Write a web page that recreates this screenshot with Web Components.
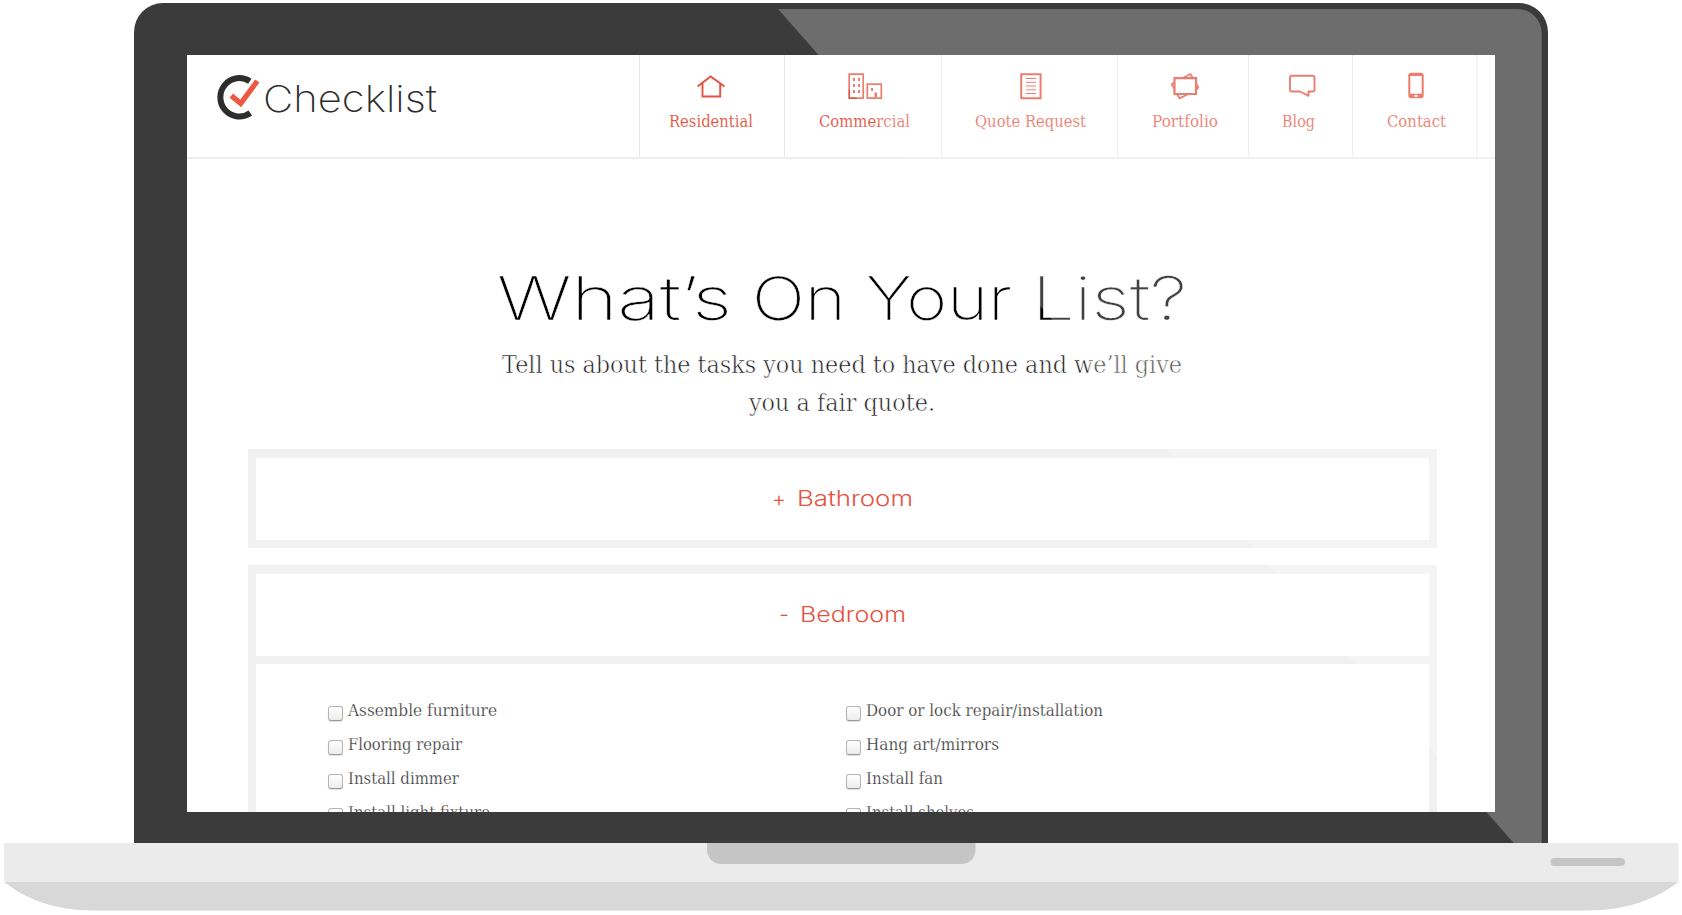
<!DOCTYPE html>
<html lang="en">
<head>
<meta charset="utf-8">
<title>Checklist</title>
<style>
html,body{margin:0;background:#fff}
body{width:1682px;height:915px;overflow:hidden;font-family:"DejaVu Serif",serif}
</style>
</head>
<body>
<laptop-frame>
  <site-header>
    <nav-item label="Residential" icon="house" cell="145.5" text="84" shift="-1"></nav-item>
    <nav-item label="Commercial" icon="buildings" cell="157" text="91" shift="3"></nav-item>
    <nav-item label="Quote Request" icon="sheet" cell="175.5" text="111" shift="3"></nav-item>
    <nav-item label="Portfolio" icon="frames" cell="131" text="66" shift="4"></nav-item>
    <nav-item label="Blog" icon="bubble" cell="104" text="33" shift="-4"></nav-item>
    <nav-item label="Contact" icon="phone" cell="124.5" text="59" shift="4"></nav-item>
  </site-header>
  <hero-title></hero-title>
  <accordion-panel sign="+" name="Bathroom" text="116" gap="11" signwidth="14"></accordion-panel>
  <accordion-panel sign="-" name="Bedroom" text="106" gap="11" signwidth="10" open>
    <check-item label="Assemble furniture" text="149"></check-item>
    <check-item label="Door or lock repair/installation" text="237"></check-item>
    <check-item label="Flooring repair" text="114"></check-item>
    <check-item label="Hang art/mirrors" text="133"></check-item>
    <check-item label="Install dimmer" text="111"></check-item>
    <check-item label="Install fan" text="77"></check-item>
    <check-item label="Install light fixture" text="142"></check-item>
    <check-item label="Install shelves" text="108"></check-item>
  </accordion-panel>
</laptop-frame>
<script>
const root = (el, html) => { const r = el.attachShadow({mode:'open'}); r.innerHTML = html; return r; };

/* Stretches one line of text to the width asked for */
customElements.define('fit-text', class extends HTMLElement {
  connectedCallback(){
    const w = +this.getAttribute('width');
    const r = root(this, `<style>:host{display:block;flex:none;width:${w}px;white-space:nowrap}
      span{display:inline-block;transform-origin:0 50%}</style><span><slot></slot></span>`);
    const s = r.querySelector('span');
    s.style.transform = `scaleX(${w / s.getBoundingClientRect().width})`;
  }
});

customElements.define('laptop-frame', class extends HTMLElement {
  connectedCallback(){
    root(this, `<style>
      :host{display:block;position:relative;width:1682px;height:912px;padding-top:3px}
      .lid{box-sizing:border-box;width:1414px;height:840px;margin-left:134px;padding:52px 53px 31px 53px;background:#3b3b3b;border-radius:29px 29px 0 0}
      .screen{height:757px;overflow:hidden;background:#fff}
      .glare{position:absolute;left:0;top:0;pointer-events:none}
      .base{display:block}
    </style>
    <div class="lid"><div class="screen"><slot></slot></div></div>
    <svg class="base" width="1682" height="69" viewBox="0 843 1682 69">
      <path fill="#ebebeb" d="M4 843H1678.500V882H4Z"/>
      <path fill="#d8d8d8" d="M4 882H1678.500C1656 899 1626 910.500 1588 910.500H93C55 910.500 26 899 4 882Z"/>
      <path fill="#c5c5c5" d="M707 843H975.500V850A14 14 0 0 1 961.500 864H721A14 14 0 0 1 707 850Z"/>
      <rect x="1550.500" y="858" width="74.500" height="8" rx="4" fill="#c5c5c5"/>
    </svg>
    <svg class="glare" width="1682" height="843" viewBox="0 0 1682 843"><path fill="#fff" fill-opacity=".255" d="M778 9H1518A24 24 0 0 1 1541.700 33V843H1513.700Z"/></svg>`);
  }
});

customElements.define('brand-logo', class extends HTMLElement {
  connectedCallback(){
    root(this, `<style>:host{display:flex;color:#2d2d2d;font:200 37px/40px Inter,sans-serif}
      svg{display:block;margin-top:20px}fit-text{margin:24px 0 0 1px}</style>
      <svg width="46" height="46" viewBox="217 75 46 46" fill="none">
      <path stroke="#2d2d2d" stroke-width="6" d="M250.800 81.300A19 19.200 0 1 0 251.300 113"/>
      <path stroke="#ee5843" stroke-width="5.300" d="M232.300 95.600L241.700 103.500L258.300 81"/></svg>
      <fit-text width="174">Checklist</fit-text>`);
  }
});

customElements.define('site-header', class extends HTMLElement {
  connectedCallback(){
    root(this, `<style>:host{display:flex;box-sizing:border-box;height:104px;border-bottom:2px solid #eee}
      brand-logo{box-sizing:border-box;width:451.500px;padding-left:28.500px}
      nav{display:flex;border-right:2px solid #f2f2f2}</style>
      <brand-logo></brand-logo><nav><slot></slot></nav>`);
  }
});

const ICONS = {
  house:`<svg width="30" height="28" viewBox="697 72 30 28"><path stroke-width="1.900" d="M698.500 86.500L711.700 76.500L725.500 86.500M703.500 83V96.500H721.200V83"/></svg>`,
  buildings:`<svg width="36" height="28" viewBox="847 72 36 28"><path stroke-width="1.700" d="M849.200 74.200H863.200V98.200H849.200ZM867.300 84.200H881.300V98.200H867.300Z"/><path fill="currentColor" stroke="none" d="M853 78h2v3h-2zm5 0h2v3h-2zm-5 6h2v3h-2zm5 0h2v3h-2zm-5 6h2v3h-2zm5 0h2v3h-2zM871 88h2v3h-2zM874.500 92.500h2.500V97.500h-2.500z"/></svg>`,
  sheet:`<svg width="24" height="28" viewBox="1019 72 24 28"><path stroke-width="2" d="M1021.200 74.300H1040.600V98.200H1021.200Z"/><path stroke-width="1" d="M1026 78.500H1036M1026 82.300H1036M1026 86H1036M1026 89.800H1036M1026 93.500H1036"/></svg>`,
  frames:`<svg width="32" height="28" viewBox="1169 72 32 28"><path stroke-width="2.200" d="M1174.500 78.200H1196V94H1174.500Z"/><path stroke-width="1.700" d="M1182.500 78L1190.500 74L1193 78M1177 94L1179.500 98.300L1188 94.300M1174 82.500L1171.800 84.500L1174.500 89M1196.500 83.500L1198.300 87.500L1196.500 89.500"/></svg>`,
  bubble:`<svg width="28" height="28" viewBox="1288 72 28 28" style="margin-left:7px"><path stroke-width="1.900" stroke-linejoin="round" d="M1292 75.700H1312.500Q1314.500 75.700 1314.500 77.700V89.500Q1314.500 91.500 1312.500 91.500H1308.500V95.800L1300 91.500H1292Q1290 91.500 1290 89.500V77.700Q1290 75.700 1292 75.700Z"/></svg>`,
  phone:`<svg width="18" height="28" viewBox="1408 72 18 28"><path fill="currentColor" stroke="none" fill-rule="evenodd" d="M1412 72.700H1422Q1424.700 72.700 1424.700 75.400V95.500Q1424.700 98.200 1422 98.200H1412Q1409.300 98.200 1409.300 95.500V75.400Q1409.300 72.700 1412 72.700ZM1411.300 76V93.800H1422.700V76ZM1415.500 95H1418.500V97H1415.500Z"/></svg>`
};
customElements.define('nav-item', class extends HTMLElement {
  connectedCallback(){
    const a = n => this.getAttribute(n);
    root(this, `<style>:host{display:flex;flex-direction:column;align-items:center;box-sizing:border-box;flex:none;
      width:${a('cell')}px;padding:17px 0 0;border-left:1.500px solid #e9e9e9;color:#e4533f;font-size:17px;line-height:24px}
      svg{display:block;fill:none;stroke:currentColor}
      fit-text{margin-top:9px;-webkit-text-stroke:.1px #fff}
      div{display:flex;flex-direction:column;align-items:center;position:relative;left:${a('shift')/2}px}</style>
      <div>${ICONS[a('icon')]}<fit-text width="${a('text')}">${a('label')}</fit-text></div>`);
  }
});

customElements.define('hero-title', class extends HTMLElement {
  connectedCallback(){
    root(this, `<style>:host{display:flex;flex-direction:column;align-items:center;height:290px}
      h1{display:flex;gap:20px;margin:104px 0 13px;font:200 60px/70px Inter,sans-serif;color:#000;-webkit-text-stroke:.4px #fff}
      p{display:flex;flex-direction:column;align-items:center;margin:0;font-size:24.500px;line-height:38px;color:#1c1c1c;-webkit-text-stroke:.6px #fff}
      h1,p{padding-left:2px}</style>
      <h1><fit-text width="235">What’s</fit-text> <fit-text width="94">On</fit-text> <fit-text width="146">Your</fit-text> <fit-text width="155">List?</fit-text></h1>
      <p><fit-text width="680">Tell us about the tasks you need to have done and we’ll give</fit-text>
      <fit-text width="186">you a fair quote.</fit-text></p>`);
  }
});

customElements.define('accordion-panel', class extends HTMLElement {
  connectedCallback(){
    const a = n => this.getAttribute(n);
    root(this, `<style>:host{display:block;box-sizing:border-box;width:1189px;margin:0 0 17px 61px;border:8px solid #f1f1f1;border-top-width:9px}
      header{display:flex;justify-content:center;gap:${a('gap')}px;height:82px;font:300 21px/82px Inter,sans-serif;color:#e4533f}
      section{display:grid;grid-template-columns:518px 518px;border-top:8px solid #f1f1f1;padding:30px 0 0 72px}
      </style><header><fit-text width="${a('signwidth')}">${a('sign')}</fit-text><fit-text width="${a('text')}">${a('name')}</fit-text></header>
      ${this.hasAttribute('open') ? '<section><slot></slot></section>' : ''}`);
  }
});

customElements.define('check-item', class extends HTMLElement {
  connectedCallback(){
    root(this, `<style>:host{display:block;height:34px;font-size:16.500px;line-height:34px;color:#333}
      label{display:flex;gap:4.500px}
      input{appearance:none;box-sizing:border-box;width:15px;height:15px;margin:12px 0 0;border:1px solid #b4b4b4;border-bottom-color:#999;border-radius:3px;background:linear-gradient(#fff,#ececec);box-shadow:0 1px 1px #ddd}
      fit-text{-webkit-text-stroke:.25px #fff}</style>
      <label><input type="checkbox"><fit-text width="${this.getAttribute('text')}">${this.getAttribute('label')}</fit-text></label>`);
  }
});
</script>
</body>
</html>
